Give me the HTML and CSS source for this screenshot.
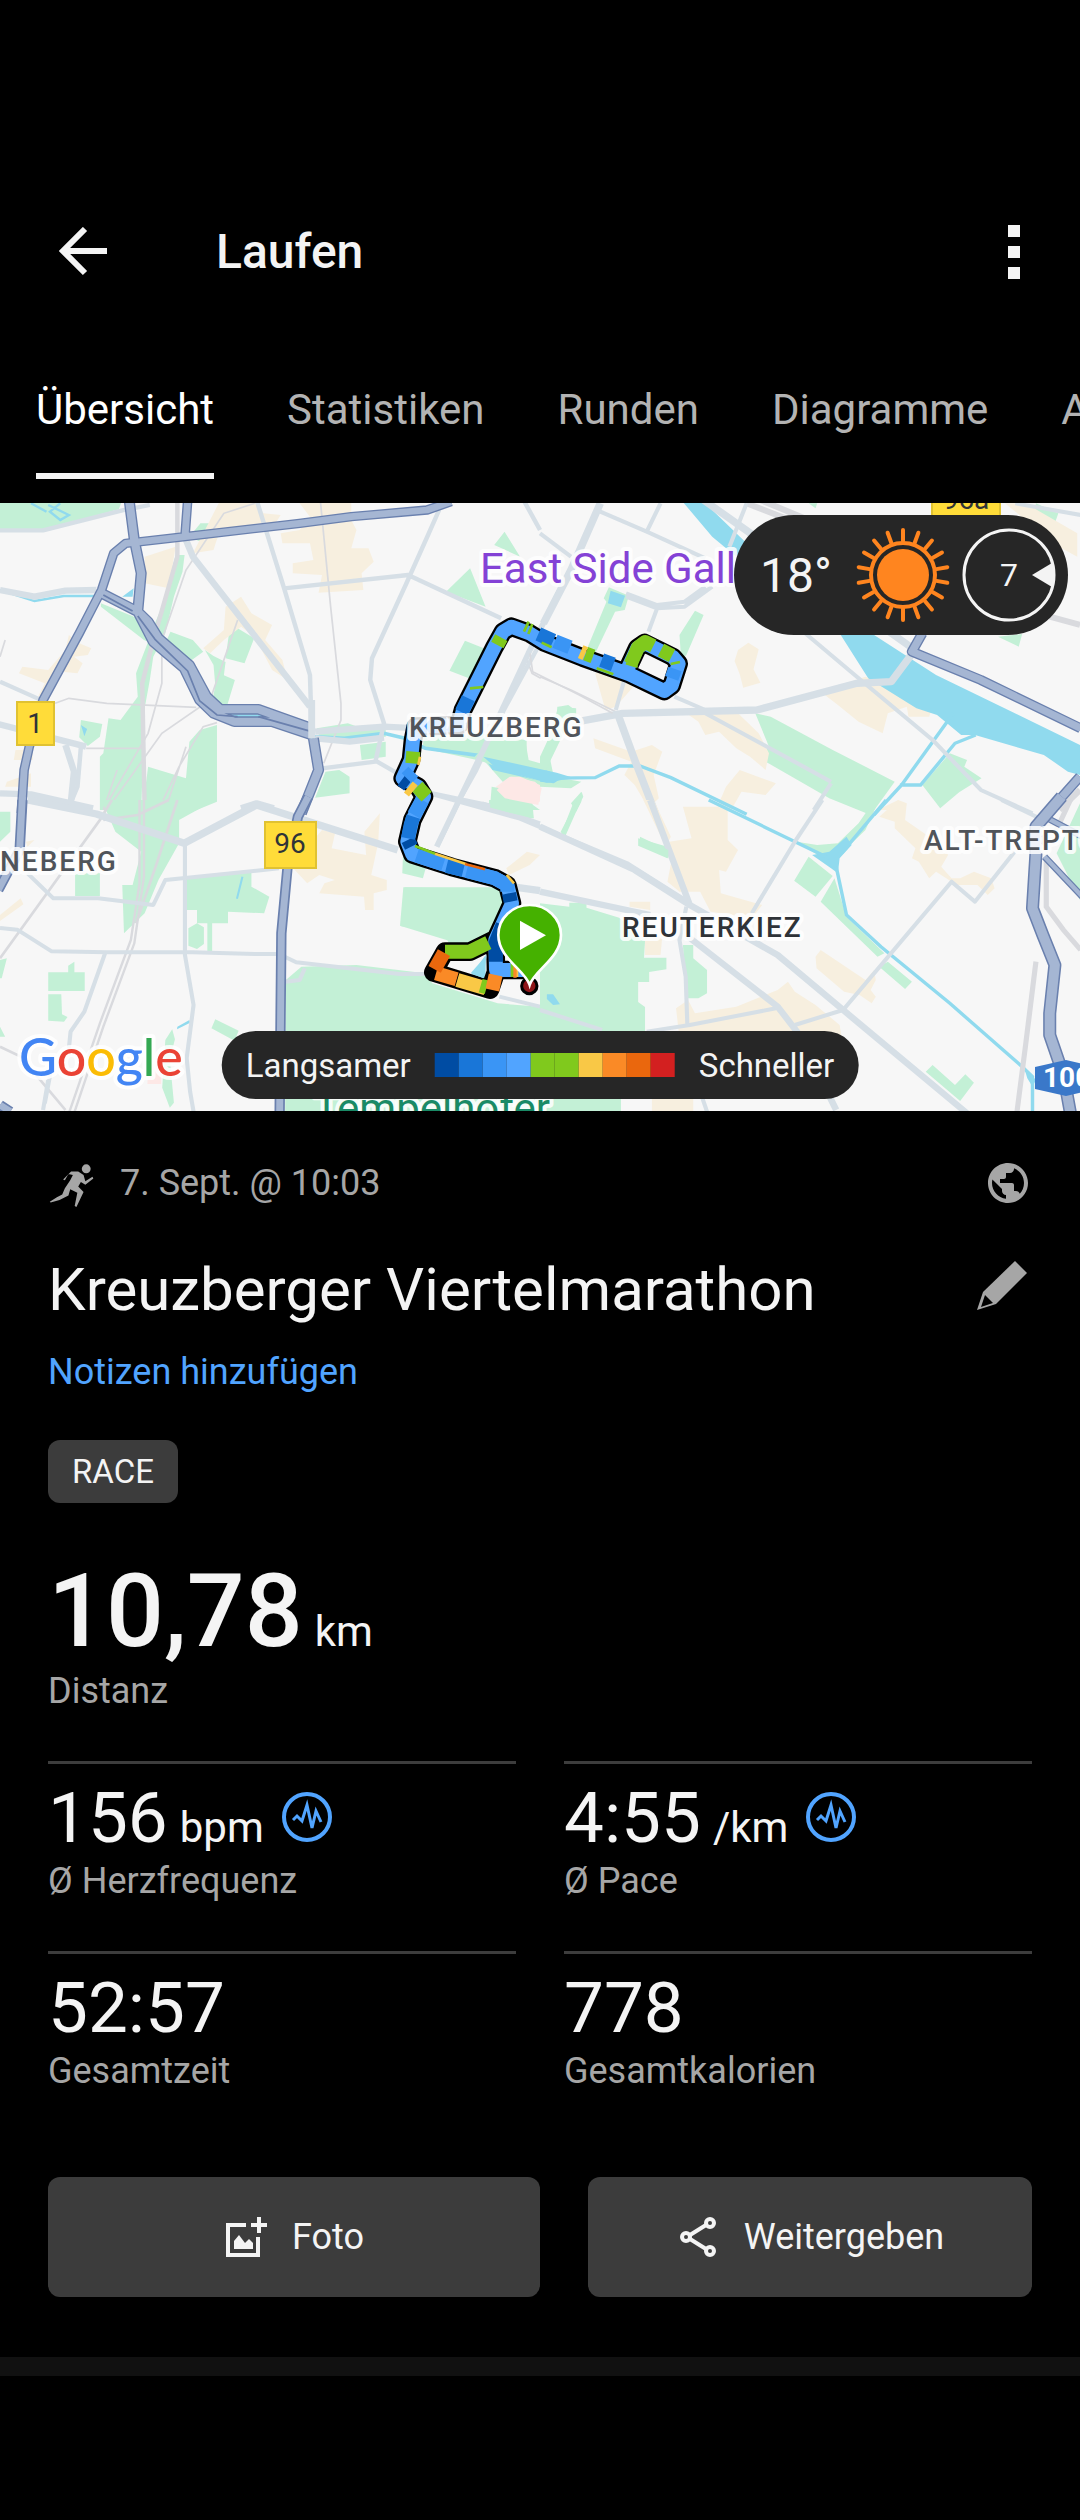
FILE: index.html
```html
<!DOCTYPE html>
<html lang="de">
<head>
<meta charset="utf-8">
<meta name="viewport" content="width=device-width, initial-scale=1">
<title>Laufen</title>
<link rel="stylesheet" href="styles.css">
</head>
<body>
<header class="appbar">
  <button class="icon-btn" type="button" aria-label="Zurück">
    <svg width="50" height="50" viewBox="0 0 50 50" fill="none" stroke="#f4f4f4" stroke-width="6"><path d="M49 24H5M27 2L5 24l22 22"/></svg>
  </button>
  <h1 class="appbar-title">Laufen</h1>
  <button class="icon-btn menu-btn" type="button" aria-label="Menü">
    <svg width="12" height="54" viewBox="0 0 12 54" fill="#f4f4f4"><path d="M0 0h12v12H0zM0 21h12v12H0zM0 42h12v12H0z"/></svg>
  </button>
</header>
<nav class="tabs">
  <a class="tab active" href="#uebersicht">Übersicht</a>
  <a class="tab" href="#statistiken">Statistiken</a>
  <a class="tab" href="#runden">Runden</a>
  <a class="tab" href="#diagramme">Diagramme</a>
  <a class="tab" href="#ausruestung">Ausrüstung</a>
</nav>
<section class="map">
  <svg class="map-canvas" viewBox="0 0 1080 608" preserveAspectRatio="xMidYMid slice">
    <rect width="1080" height="608" fill="#f7f7f7"/>

    <!-- north-west -->
    <g transform="translate(0 -3) scale(.3444 .3333)">
      <g class="park">
        <path d="M0 0H355L345 28 125 90 0 90zM562 95l20-25h35l18 18-5 30-30 14-30-12zM510 165l26 0-6 50-25 75-25 110-35 70-10 70-15 85-10 305H290V770l10-10 15-105 35 5 50-70-5-70 35-95-12-5-125-100 0-10 155 65 20-50zM495 395l65 25 30 35-40 30-50-15-20-40zM665 400l25-15 48 30-28 75-55-15zM595 450l25 18 35 18-5 40 32 14-22 75-45 0 10-60-5-60zM235 660l62 12-7 38-35 28-25-26zM430 800l110 35 10-110 30-35 50-15V905L500 960H410zM1465 95l45 75-75-35zM1365 205l45 115-115-45zM1350 422l55 23-30 95-70-28zM920 685l90-15 40 15 70 0 0 25-190 10zM1045 735l75-10v45l-70 10zM945 815l40-5 30 20v50l-100 13zM1230 700l170 0 125 20 10 60 33 10v70l-100-5-60-70-180-40zM1420 930l20-65 60 15 68 50z"/>
      </g>
      <g class="built">
        <path d="M640 0h100l25 40 50 5-15 25-160 15-20 65-60 10 40-80zM420 170l90-30-20 125-70-15zM815 100l55-10 30-40-30-40V0h150v60l15 30-15 55h50l15 40-35 35 5 50-130 8 10-53-85-5v-30l60-10-10-50-80 0zM655 320l45-30 30 50 60 35-20 45 50 60 15 60-45-30-50-100-40-30-50 40-40 40-20-15 60-55zM200 405l30 25 35 15-10 20-40 5 25 20-15 30-45-5-30 55-40 20 20-40-75-30 10-20 75 10 50-60zM45 750h50v30H40zM20 845l70-25v40l-75 0z"/>
      </g>
      <path class="pink" d="M1440 860l40-30 30 0 58 25v50l-48-5-15 20-50-30z"/>
      <g class="water">
        <path class="fill" d="M355 290l33-25-3 25zM235 675l18 12-8 22zM1405 770l45 5 118 30v38l-138-33z"/>
        <path d="M0 270l100 33 85-15h90M140 15l60 30-25 15-30-25 30-25M90 10l45 25" stroke-width="7"/>
        <path d="M440 405l95 90 45 110 70 43 120 0 135 62 95 5 115-15 60 15 60 30 180 25" stroke-width="11"/>
      </g>
      <g class="rail">
        <path d="M515 0v170L440 440l-27 110 7 380" stroke-width="13"/>
        <path d="M740 10l-90 30L540 210 470 420v130l-40 150-130 230M690 360l-80 240-140 100-160 230M410 745H250M160 610l40-15 110 15 260 12M930 0l30 320 30 290 0 50-50 130M460 930l60-130 70-120 40-12M340 810l-40 120M1530 480l15 40 25 15M15 420L0 470M480 930l60-190" stroke-width="5"/>
      </g>
      <g class="road">
        <path d="M0 91h125l230-60 80-16M745 0l80 265 75 260 5 170M825 265l360-40 270 130M1275 30l-30 70-65 150-100 225-5 65 40 130-25 115-155 20M0 545l130 60M1568 430l-105 200-80 180-60 110M1095 785l160 95 230 50M1520 0l48 90M235 740l-10 120-20 50" stroke-width="13"/>
        <path d="M540 120l20 50 340 450M0 270l100 20 90-18 90-2M915 695l200-15 100 5M915 715l100 10 100-12M-5 672L250 740M190 735l25 80-10 100M0 880l90 3 180 42M700 925l45-15 50 15" stroke-width="19"/>
      </g>
      <g class="hwy">
        <path d="M545 0l-8 110M1310 5l-70 25-220 20-150 20-333 40-172 20-35 30-35 110-30 60-35 70-105 200-40 140-15 70-8 130" stroke-width="28"/>
        <path d="M375 0l15 120 20 100-10 115M400 335l45 90 90 80 45 95 40 40 60 25h110l115 40M295 280l105 55 30 30 30 50 90 80 50 95 40 38h110l155 57M910 715l15 95-50 130" stroke-width="32"/>
        <path class="hwy-in" d="M545 0l-8 110M1310 5l-70 25-220 20-150 20-333 40-172 20-35 30-35 110-30 60-35 70-105 200-40 140-15 70-8 130" stroke-width="20"/>
        <path class="hwy-in" d="M375 0l15 120 20 100-10 115M400 335l45 90 90 80 45 95 40 40 60 25h110l115 40M295 280l105 55 30 30 30 50 90 80 50 95 40 38h110l155 57M910 715l15 95-50 130" stroke-width="24"/>
        <path d="M300 285l85 48M400 348l50 70 95 95 35 90 50 42 60 5M750 650l155 45" stroke-width="5"/>
      </g>
      <path class="road" d="M905 600v115" stroke-width="20"/>
    </g>

    <!-- north-east -->
    <g transform="translate(540 -3) scale(.3444 .3333)">
      <g class="park">
        <path d="M200 262l58 25-12 43-28 5-60 130-25-10 60-150-8-10zM450 332l25 13-50 120-15 15-5-75zM625 640l45 10 180 100 180 95-70 100-120-50-185-110-10-25 20-20zM1110 855l80-95 50 20-8 20 50 35-65 42-55 48zM50 620l55 5v30l-55-5zM50 660l-20 120 10 50 80 15-30 20-90-5 0-90zM90 910l30-35 0 30-15 30zM1440 10l65 30-10 30-60-20zM1330 410l70-8-10 38zM780 10h25l-5 15z"/>
      </g>
      <g class="built">
        <path d="M575 450l30-22 30 20-15 60 20 40-50 15-10-40-15-40zM815 575l130-45 140 55 60 20-15 45-60 0-5-30-55 20-15 60-70-35-60-50zM425 640l150 0 60 60 30 60-10 50-45-40-40-25-50-50-40 10-20-40zM155 715l110 40 60-20 30 20-25 70 15 70-30 30-40-70-30-30 20-40-105-40zM540 860l40-50 105 40-30 35-70-10-30 55-40-10zM160 520l60-10 60 40-60 70-30 10zM1350 10h60l150 90v70l-90-50-60-60zM980 930l60-30 20 30z"/>
      </g>
      <g class="water">
        <path class="fill" d="M410 0h60l130 130-30 40-70-60zM870 400l100 5 180 120 418 210v90l-35-10-70-50-200-60-40 0-70-60-60-20-140-90zM205 272l42 15-12 35-38-12zM0 805l70 25-30 20-40-5z"/>
        <path d="M1200 640l-150 215-80 90M1265 705l-60 25-100 125h-60M0 835l160-2 70-35 60 0 90 35 220 110" stroke-width="10"/>
      </g>
      <g class="rail">
        <path d="M600 10l150 60M640 0l140 60M1480 350l88 25M1568 870l-60 60" stroke-width="18"/>
        <path d="M0 530l90 40 130 65" stroke-width="5"/>
      </g>
      <g class="road">
        <path d="M175 35L310 95l170 80M350 10l-40 85M600 10l-50 130M0 100l90 70M250 290l90 35 80-5 80-60M250 280l90 35 80-10 60-45M340 325l-25 70M245 540l-25 90M390 590l90 40M770 400l150 130 220 190 140 150 150 70M845 850l-50 80M480 640l170 95 195 110M1380 10l190 35" stroke-width="12"/>
        <path d="M175 10L90 210 10 370M110 665l130-25 390-10 290-80 100-5 65-90M225 640l50 140 60 160M475 0l600 440" stroke-width="22"/>
      </g>
      <g class="hwy">
        <path d="M1110 400l-30 55 200 85 290 145M1568 830l-95 110" stroke-width="30"/>
        <path class="hwy-in" d="M1110 400l-30 55 200 85 290 145M1568 830l-95 110" stroke-width="22"/>
      </g>
    </g>

    <!-- south-west -->
    <g transform="translate(0 297) scale(.3444 .3333)">
      <g class="park">
        <path d="M295 0h330L520 60v70l-60 110-40 100-60 60-5-145 30 0 25-100-75-60zM0 35l30 0v60l-30 30zM218 220h72v68h-72zM540 235l190-25 0 50 52 30-15 50-105-5v35h-90v-40h-32zM547 385l25-15 20 12v50l-20 15-25-10zM602 365h14v88h-14zM140 517h58l0-20 18-12v32h30v56H140zM140 583h38l2 60 16 8-10 14-46-3zM0 480l20-5-15 60-5 0zM0 680l15 30H0zM625 658l68 34-12 30-67-37zM480 720l20-32 8 30-15 60 12 130-12 15-22-60zM830 540l45-40 160-5 200 25 20 30 190 60 123 10v320H828zM1175 262l275 5 60 120-200 60-20-50-125-18zM1170 170l70 20-12 45-60-15zM1420 0h125l5 55-50 0-80-40z"/>
      </g>
      <g class="built">
        <path d="M935 90l38 10-10 45 100 20-5-70 45-55-5 90-20 95 45 15 0 30-38 10 0 50h-25l-3-40-130-10 15-30 30-10-45-15-35 25-45-50 30-40zM1470 205l60-50 38 10-30 30-60 30zM0 345l60-50 8 18-68 50zM75 125l25-5-20 20z"/>
      </g>
      <g class="water">
        <path class="fill" d="M515 680l35-20 2 8-38 20zM1410 465l0 75-40-15z"/>
        <path d="M704 230l-16 66" stroke-width="6"/>
      </g>
      <path class="pink" d="M430 790l38 10v52h-40z"/>
      <g class="rail">
        <path d="M405 0v250l-25 170-90 250-90 270M418 0v230L390 430 300 680 215 940" stroke-width="7"/>
        <path d="M325 0l-35 60L0 475M0 740l60 30 130 160M515 0l-60 190-60 180M490 0l-90 45-100 15" stroke-width="8"/>
      </g>
      <g class="road">
        <path d="M80 220l75 75 130 0 160 20 35-75 330-35M0 384l50 5 100 65 160 3 250 0 180 5 70 0 50 25 300 35 80 0M537 125v340l25 150-20 160 10 100 10 60M305 460l-60 175-40 60-5 50M150 800l-20 110M1330 10l-60 130M1450 590l118 30M830 545l40-5 15-35M1400 10l168 60M140 840l-15 90" stroke-width="12"/>
        <path d="M80 0l200 42 255 88 210-115 410 135M1500 262l68 10" stroke-width="22"/>
      </g>
      <g class="hwy">
        <path d="M65 0l-8 150-62 120M895-10l-30 60-30 150-18 200-5 533M0 915l30 20" stroke-width="30"/>
        <path class="hwy-in" d="M65-10l-8 160-62 120M895-10l-30 60-30 150-18 200-5 533M0 915l30 20" stroke-width="20"/>
      </g>
    </g>

    <!-- south-east -->
    <g transform="translate(540 297) scale(.3444 .3333)">
      <g class="park">
        <path d="M0 310l85 10v-12h50v15l95 30 75 70-3 50h65v35l-50 8v30h-32v60l20 15v100l-70 0H0zM415 435h30v40l40 35v70l-25 15h-35zM0 890h235v45H0zM60 105L100 0h20L75 105zM285 115l85 25v35l-85-38zM780 170l70 58-50 62-62-48zM855 235l35 115 110 110-20 10-165-165zM745 125l60 10 60-5 60-60 40-60 15 0-35 80-60 60-40 40zM985 500l25-15 70 60-20 22zM1120 815l20-20 65 60 30-32 25 25-40 55zM1500 160l68-150v290z"/>
      </g>
      <g class="built">
        <path d="M415 20h100l30 10v90l30 30-35 65-20-5 5 70 120 35-30 40-120-20-30-60h-60l-35-30 15-80-10-40 65-10zM300 0h30l50 110-15 30zM260 305l60 0 0 25-60-10zM305 400l50 10-5 55h-45zM1040 0l25 10-5 50 70 50 15-15 40 70-20 35 30 35 25 0 40-20 50 20 10 30-20 20-30-30-60 0-60-40-20 20-30-50-20-10 10-30-60-60 0-20-45-15zM800 470l15-20 130 90 25-30 5 30-15 30 15 20-12 20-35-25-45-10-80-70zM395 625l35-25 20 40 120-20 120-50 30-25 20 30 60 40 70 60 10 60H325l80-20zM325 895h120v38H325z"/>
      </g>
      <g class="water">
        <path class="fill" d="M790 165l50-10 50-45 15 25-35 40-5 45-20-15zM20 583h18l20 30-20 2-18-18zM1405 800l35 40-10 20-15-25z"/>
        <path d="M490 0l350 175M1005 0l-130 160M860 200l30 145 100 95 200 170 210 190 30 30 0 110" stroke-width="10"/>
      </g>
      <g class="rail">
        <path d="M1440 485l-30 250-25 200M1470 180l0 140 50 70 50 60M1540 0l-45 100" stroke-width="15"/>
      </g>
      <g class="road">
        <path d="M820 0l-80 125-125 215M880 630l315-385 68 60 115-150M740 675l140-45M310 695l125-20 250-50M425 320l-20 100 18 110 5 150M0 630l180 60M1340 0l110 55M470 890l15 45" stroke-width="12"/>
        <path d="M0 80l275 130 160 105 255 150 190 165 360 310M0 275l320 70M320 0l115 315M430 410l260 210 60 80 110 230" stroke-width="19"/>
      </g>
      <g class="hwy">
        <path d="M1465 50l110 60M1465 170l110 120" stroke-width="20"/>
        <path class="hwy-in" d="M1465 50l110 60M1465 170l110 120" stroke-width="13"/>
        <path d="M1515-10l-75 90 0 80-10 165 30 80 35 90-15 145 0 65 40 120 30 170" stroke-width="38"/>
        <path class="hwy-in" d="M1515-10l-75 90 0 80-10 165 30 80 35 90-15 145 0 65 40 120 30 170" stroke-width="29"/>
      </g>
    </g>

    <!-- centre -->
    <g transform="translate(380 87) scale(.3333)">
      <path class="park" d="M330 450h110v60l40 15 55-175 30-5 20 15-80 165-25 50-200-70zM335 590l110 20 15 75-130-30zM605 605l5 15-60 115-8-10z"/>
      <path class="water fill" d="M310 500l220 48 50 15-80 15-150-42z"/>
      <path class="pink" d="M350 600l45-40 70 15 20 20-10 50-50-10-50-10z"/>
      <g class="road"><path d="M540 0L445 190 310 480 170 770" stroke-width="17"/><path d="M150 610l270 75 320 135 190 120" stroke-width="14"/></g>
      <path class="rail" d="M450 190l8 55 140 70 100 55" stroke-width="5"/>
      <path class="park" d="M70 892h285l15 120-100 60-210-65zM780 740l85 40v25l-85-40z"/>
      <g class="route">
        <path class="route-edge" d="M430 1140l-82 0-2-90 50-110-14-55-37-20-130-34-118-38-15-38 15-65 35-70-18-30-46-25 25-55 6-60 8-40 130-5 12-45 95-190 25-45 25-15 55 20 45 28 115 45 140 50 104 50 22-16 21-66-17-20-85-42-22 15-28 60M350 1045l-80 40h-75l-35 62 170 52 17-50"/>
        <path d="M430 1140l-82 0-2-90 50-110-14-55-37-20-130-34-118-38-15-38 15-65 35-70-18-30-46-25 25-55 6-60 8-40 130-5 12-45 95-190 25-45 25-15 55 20 45 28 115 45 140 50 104 50 22-16 21-66-17-20-85-42-22 15-28 60" stroke="#51a4ff"/>
        <path d="M348 1115l0-60 20-50M392 935l-5-25M94 770l-10-20M85 585l-20-15" stroke="#004ca3"/>
        <path d="M84 745l8-40 8-25M250 840l-50-12M265 325l-20 42M475 132l45 20M665 210l35 13" stroke="#1976d8"/>
        <path d="M382 905l0-20-37-20-85-22M190 823l-80-26M102 675l25-45M100 545l-20 20M570 172l-45-18M875 265l10-28" stroke="#3a95f5"/>
        <path d="M352 165l12-22M97 520l3-35M140 620l-28-30M752 222l22-50 22-16 24 12M843 180l33 17M617 191l22 8M325 1058l-55 27h-75" stroke="#80c91d"/>
        <path d="M100 603l-15-12M602 185l14 6M232 1170l85 25M415 1140h-16" stroke="#f9c846"/>
        <path d="M320 1192l-18-5M392 1140h10" stroke="#80c91d"/>
        <path d="M168 1150l62 18M347 1155l-10 45M400 1142h10" stroke="#fa8a26"/>
        <path d="M192 1088l-28 50" stroke="#ea670d"/>
        <path class="thin" d="M105 768l60 23M270 295l40-4M485 158l30 14M650 235l50 18M738 220l35 10M872 222l28-6M432 125l14-30M445 132l12-30" stroke="#80c91d"/>
        <path class="thin" d="M165 791l95 32M380 855l22 25M120 500l-5 25" stroke="#f9c846"/>
        <path class="thin" d="M255 822l60 16" stroke="#ea670d"/>
      </g>
      <path d="M320 1095l-10 70-38-15z" fill="#90daee"/>
      <path d="M138 1145l20 2-8 18-12-6zM325 1205l20 4-10 10z" fill="#000"/>
      <circle cx="448" cy="1188" r="23" fill="#8e1518" stroke="#000" stroke-width="9"/>
      <path d="M449 1185C435 1140 355 1105 355 1035a94 90 0 0 1 188 0c0 70-80 105-94 150z" fill="#45b100" stroke="#fff" stroke-width="8"/>
      <path d="M420 992l78 44-78 44z" fill="#fff"/>
    </g>

    <g class="shield">
      <rect x="932" y="-20" width="68" height="40"/><rect x="17" y="199" width="37" height="43"/><rect x="265" y="319" width="51" height="46"/>
    </g>
    <path d="M1035 564l31-7 31 7v22l-31 7-31-7z" fill="#3a78c9"/>
    <g class="shield-text">
      <text x="966" y="6">96a</text><text x="35" y="230">1</text><text x="290" y="350">96</text>
    </g>
    <text class="a-road" x="1043" y="584">100</text>
    <g class="district">
      <text x="409" y="234">KREUZBERG</text><text x="0" y="368">NEBERG</text><text x="924" y="347">ALT-TREPTOW</text>
      <text class="dark" x="622" y="434">REUTERKIEZ</text>
    </g>
    <text class="sight" x="480" y="80">East Side Gall</text>
    <text class="parkname" x="314" y="620">Tempelhofer</text>
    <text class="logo" x="19" y="573"><tspan fill="#4285f4">G</tspan><tspan fill="#ea4335">o</tspan><tspan fill="#fbbc05">o</tspan><tspan fill="#4285f4">g</tspan><tspan fill="#34a853">l</tspan><tspan fill="#ea4335">e</tspan></text>
  </svg>

  <div class="weather">
    <span class="temp">18°</span>
    <svg width="94" height="96" viewBox="-47 -48 94 96" fill="none" stroke="#ff851f" stroke-width="4" stroke-linecap="round">
      <circle r="26" fill="#ff851f" stroke="none"/><circle r="32"/>
      <g id="r3"><path id="ray" d="M0-34V-45"/><use href="#ray" transform="rotate(20)"/><use href="#ray" transform="rotate(40)"/></g>
      <use href="#r3" transform="rotate(60)"/><use href="#r3" transform="rotate(120)"/><use href="#r3" transform="rotate(180)"/><use href="#r3" transform="rotate(240)"/><use href="#r3" transform="rotate(300)"/>
    </svg>
    <span class="wind">7
      <svg class="wind-dial" width="94" height="94" viewBox="-47 -47 94 94"><circle r="45" fill="none" stroke="#f4f4f4" stroke-width="3"/><path d="M23 0L43-12Q47 0 43 12z" fill="#f4f4f4"/></svg>
    </span>
  </div>

  <div class="legend">
    <span>Langsamer</span>
    <span class="scale"><i class="c1"></i><i class="c2"></i><i class="c3"></i><i class="c4"></i><i class="c5"></i><i class="c5"></i><i class="c6"></i><i class="c7"></i><i class="c8"></i><i class="c9"></i></span>
    <span>Schneller</span>
  </div>
</section>

<main class="content">
  <div class="meta">
    <svg width="48" height="48" viewBox="-7 -3 54 54" fill="#a6a6a6">
      <circle cx="36" cy="8" r="5"/>
      <path d="M19 11h8l6 4 2 7 8-5 1 2-9 7-5-3-3 5 6 6-8 17-2-1 3-15-8-4-2 7-10 5-10 3-1-1 8-5 6-3 3-7 6-9 3-6-5-1-4 7-2-1z"/>
    </svg>
    <span class="date">7. Sept. @ 10:03</span>
    <svg width="48" height="48" viewBox="0 0 24 24" fill="#a6a6a6"><path d="M12 2C6.480 2 2 6.480 2 12s4.480 10 10 10 10-4.480 10-10S17.520 2 12 2zm-1 17.930c-3.950-.490-7-3.850-7-7.930 0-.620.080-1.210.210-1.790L9 15v1c0 1.100.900 2 2 2v1.930zm6.900-2.540c-.260-.810-1-1.390-1.900-1.390h-1v-3c0-.550-.450-1-1-1H8v-2h2c.550 0 1-.450 1-1V7h2c1.100 0 2-.900 2-2v-.410c2.930 1.190 5 4.060 5 7.410 0 2.080-.800 3.970-2.100 5.390z"/></svg>
  </div>
  <div class="title-row">
    <h2 class="title">Kreuzberger Viertelmarathon</h2>
    <button class="icon-btn edit-btn" type="button" aria-label="Titel bearbeiten">
      <svg width="52" height="52" viewBox="0 0 52 52"><path d="M39 1L51 13 20 44 1 50 7 32z" fill="#a6a6a6"/><path d="M9 35l8 8-12 4z" fill="#000"/></svg>
    </button>
  </div>
  <a class="notes" href="#notizen">Notizen hinzufügen</a>
  <div class="tags"><span class="tag">RACE</span></div>

  <div class="distance"><span class="big">10,78</span><span class="unit">km</span></div>
  <div class="label">Distanz</div>

  <div class="stats">
    <div class="stat">
      <div class="value"><span class="num">156</span><span class="unit">bpm</span>
        <svg class="pulse" width="50" height="50" viewBox="0 0 50 50" fill="none" stroke="#51a4ff"><circle cx="25" cy="25" r="23" stroke-width="4"/><path d="M11 28l4-4 5 5 5-16 5 23 4-17 5 11" stroke-width="3"/></svg></div>
      <div class="label">Ø Herzfrequenz</div>
    </div>
    <div class="stat">
      <div class="value"><span class="num">4:55</span><span class="unit">/km</span>
        <svg class="pulse" width="50" height="50" viewBox="0 0 50 50" fill="none" stroke="#51a4ff"><circle cx="25" cy="25" r="23" stroke-width="4"/><path d="M11 28l4-4 5 5 5-16 5 23 4-17 5 11" stroke-width="3"/></svg></div>
      <div class="label">Ø Pace</div>
    </div>
    <div class="stat">
      <div class="value"><span class="num">52:57</span></div>
      <div class="label">Gesamtzeit</div>
    </div>
    <div class="stat">
      <div class="value"><span class="num">778</span></div>
      <div class="label">Gesamtkalorien</div>
    </div>
  </div>

  <div class="actions">
    <button class="action" type="button">
      <svg width="44" height="44" viewBox="0 0 44 44" fill="#f4f4f4"><path d="M2 8h20v4H6v26h26V22h4v20H2zM33 2h4v6h6v4h-6v6h-4v-6h-6V8h6zM10 34V26l5-6 6 8 4-4 4 4v6z"/></svg>
      Foto
    </button>
    <button class="action" type="button">
      <svg width="44" height="44" viewBox="0 0 44 44" fill="none" stroke="#f4f4f4" stroke-width="4"><circle cx="10" cy="22" r="4"/><circle cx="34" cy="8" r="4"/><circle cx="34" cy="36" r="4"/><path d="M14 20L30 10M14 24l16 10"/></svg>
      Weitergeben
    </button>
  </div>
</main>
<div class="band"></div>
</body>
</html>
```
FILE: styles.css
```css
* { box-sizing: border-box; }

body {
  margin: 0;
  min-height: 100vh;
  background: #000;
  color: #f4f4f4;
  font-family: Roboto, "Liberation Sans", sans-serif;
  font-size: 36px;
  overflow-x: hidden;
}

button {
  font: inherit;
  color: inherit;
  border: 0;
  cursor: pointer;
}

svg { display: block; flex: none; }

.icon-btn {
  padding: 0;
  background: none;
}

.appbar {
  display: flex;
  align-items: center;
  padding: 216px 60px 0 58px;
  height: 288px;
}

.appbar-title {
  margin: 0 0 0 108px;
  font-size: 48px;
  line-height: 56px;
  font-weight: 500;
}

.menu-btn { margin-left: auto; }

.tabs {
  display: flex;
  gap: 73px;
  height: 215px;
  padding: 72px 36px 0;
  overflow: hidden;
}

.tab {
  height: 119px;
  padding-top: 24px;
  font-size: 42px;
  line-height: 52px;
  color: #b3b3b3;
  text-decoration: none;
  white-space: nowrap;
}

.tab.active {
  color: #fff;
  border-bottom: 6px solid #f4f4f4;
}

.map { position: relative; }

.map-canvas {
  width: 100%;
  height: auto;
}

.park { fill: #c3f0d6; }
.built { fill: #f7efdf; }
.pink { fill: #fde8e6; }
.water { fill: none; stroke: #90daee; }
.water .fill, .water.fill { fill: #90daee; stroke: none; }
.rail { fill: none; stroke: #d9dade; }
.road { fill: none; stroke: #d6dfe6; stroke-linejoin: round; }
.hwy { fill: none; stroke: #6a80ae; stroke-linejoin: round; }
.hwy-in { stroke: #a5b6d3; }

.route { fill: none; stroke-width: 42; stroke-linejoin: round; }
.route-edge { stroke: #000; stroke-width: 56; stroke-linecap: round; }
.route .thin { stroke-width: 8; }

.shield { fill: #ffdc39; stroke: #e0c232; stroke-width: 2; }
.shield-text { font-size: 28px; fill: #2f3338; text-anchor: middle; }
.a-road { font-size: 28px; font-weight: 700; fill: #fff; }

.district, .sight, .parkname, .logo {
  paint-order: stroke;
  stroke: #fff;
  stroke-opacity: .85;
  stroke-width: 8px;
  stroke-linejoin: round;
}

.district {
  font-size: 28px;
  font-weight: 500;
  letter-spacing: 2px;
  fill: #50545a;
}

.district .dark { fill: #2f3338; }
.sight { font-size: 42px; fill: #8442d6; }
.parkname { font-size: 42px; fill: #1a8a66; }
.logo { font-family: Lato, sans-serif; font-size: 52px; font-weight: 500; }

.weather {
  position: absolute;
  top: 12px;
  right: 12px;
  display: flex;
  align-items: center;
  height: 120px;
  padding: 0 12px 0 26px;
  border-radius: 60px;
  background: #262626;
}

.temp {
  margin-right: 24px;
  font-size: 48px;
}

.wind {
  position: relative;
  display: flex;
  align-items: center;
  justify-content: center;
  width: 94px;
  height: 94px;
  margin-left: 12px;
  font-size: 32px;
}

.wind-dial {
  position: absolute;
  inset: 0;
}

.legend {
  position: absolute;
  bottom: 12px;
  left: 50%;
  transform: translateX(-50%);
  display: flex;
  align-items: center;
  gap: 24px;
  height: 68px;
  padding: 0 24px;
  border-radius: 34px;
  background: #262626;
  font-size: 33px;
}

.scale { display: flex; }
.scale i { width: 24px; height: 24px; }
.c1 { background: #004ca3; }
.c2 { background: #1976d8; }
.c3 { background: #3a95f5; }
.c4 { background: #51a4ff; }
.c5 { background: #80c91d; }
.c6 { background: #f9c846; }
.c7 { background: #fa8a26; }
.c8 { background: #ea670d; }
.c9 { background: #d32020; }

.content { padding: 48px 48px 60px; }

.meta {
  display: flex;
  align-items: center;
  gap: 24px;
  height: 48px;
}

.date {
  flex: 1;
  color: #a6a6a6;
}

.title-row {
  display: flex;
  align-items: flex-start;
  justify-content: space-between;
  margin-top: 41px;
  padding-right: 4px;
}

.edit-btn { margin-top: 12px; }

.title {
  margin: 0;
  font-size: 60px;
  line-height: 84px;
  font-weight: 400;
}

.notes {
  display: block;
  margin-top: 8px;
  line-height: 64px;
  color: #51a4ff;
  text-decoration: none;
}

.tags {
  display: flex;
  margin-top: 36px;
}

.tag {
  padding: 0 24px;
  border-radius: 12px;
  background: #3c3c3c;
  font-size: 33px;
  line-height: 63px;
}

.distance {
  display: flex;
  align-items: baseline;
  gap: 12px;
  margin-top: 52px;
}

.big {
  font-size: 102px;
  line-height: 112px;
  font-weight: 500;
}

.unit {
  font-size: 42px;
  line-height: 48px;
}

.label {
  color: #a6a6a6;
  line-height: 48px;
}

.stats {
  display: grid;
  grid-template-columns: 1fr 1fr;
  column-gap: 48px;
  margin-top: 46px;
}

.stat {
  height: 190px;
  border-top: 3px solid #3d3d3d;
  padding-top: 15px;
}

.value {
  display: flex;
  align-items: baseline;
}

.num {
  font-size: 71px;
  line-height: 78px;
}

.value .unit { margin-left: 12px; }
.pulse { margin-left: 18px; }

.actions {
  display: grid;
  grid-template-columns: 41fr 37fr;
  gap: 48px;
  margin-top: 36px;
}

.action {
  display: flex;
  align-items: center;
  justify-content: center;
  gap: 24px;
  height: 120px;
  border-radius: 12px;
  background: #3c3c3c;
}

.band {
  height: 19px;
  background: #111;
}
```
